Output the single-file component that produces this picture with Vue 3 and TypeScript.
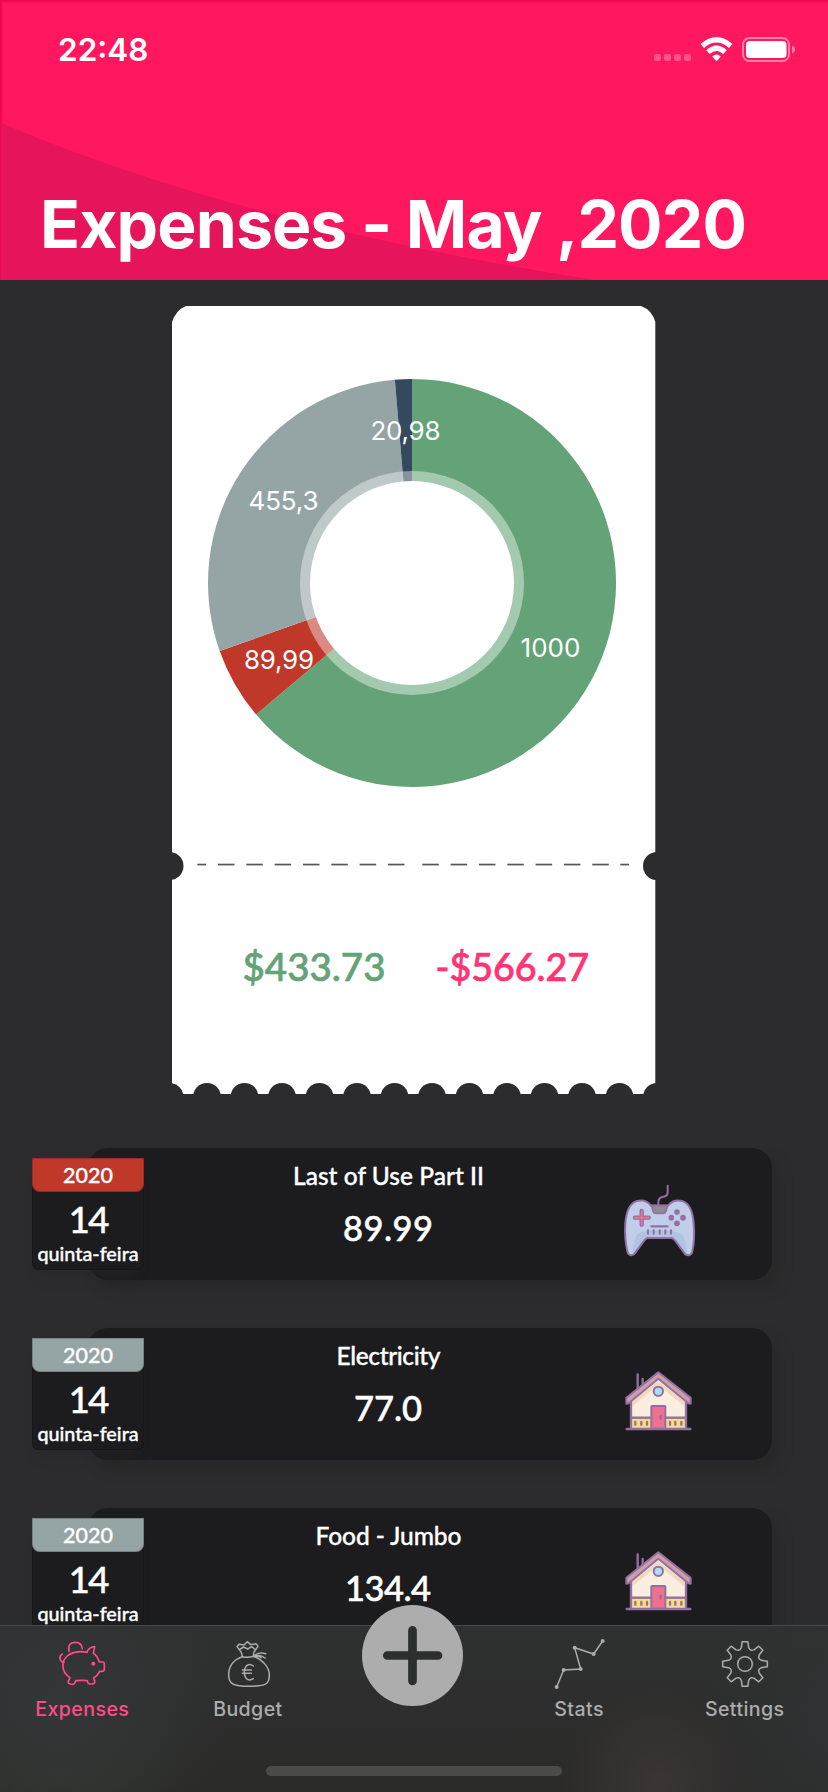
<script setup lang="ts">
interface Slice { label: string; value: number; color: string; x: number; y: number; width: number }
interface Expense { title: string; amount: string; color: string; icon: 'game' | 'house'; titleWidth: number; amountWidth: number }

const slices: Slice[] = [
  { label: '1000', value: 1000, color: '#64a377', x: 348.5, y: 351, width: 60 },
  { label: '89,99', value: 89.99, color: '#bf382a', x: 72, y: 363, width: 70 },
  { label: '455,3', value: 455.3, color: '#95a4a5', x: 76.5, y: 204, width: 70 },
  { label: '20,98', value: 20.98, color: '#34495e', x: 198.5, y: 134, width: 70 },
]

const total = slices.reduce((sum, s) => sum + s.value, 0)
const cx = 240
const cy = 277
const radius = 204

let running = 0
const wedges = slices.map((s) => {
  const a0 = (running / total) * Math.PI * 2
  running += s.value
  const a1 = (running / total) * Math.PI * 2
  const point = (a: number) => `${(cx + radius * Math.sin(a)).toFixed(2)} ${(cy - radius * Math.cos(a)).toFixed(2)}`
  const large = a1 - a0 > Math.PI ? 1 : 0
  return { ...s, d: `M${cx} ${cy}L${point(a0)}A${radius} ${radius} 0 ${large} 1 ${point(a1)}Z` }
})

const scallops = Array.from({ length: 14 }, (_, i) => -2.5 + i * 37.5)
const dashes = [
  { x: 25.3, w: 8.7 },
  ...Array.from({ length: 7 }, (_, i) => ({ x: 46 + i * 28.33, w: 16.5 })),
  ...Array.from({ length: 7 }, (_, i) => ({ x: 250.3 + i * 28.33, w: 16.5 })),
  { x: 448.3, w: 8.7 },
]

const expenses: Expense[] = [
  { title: 'Last of Use Part II', amount: '89.99', color: '#bf382a', icon: 'game', titleWidth: 191, amountWidth: 90 },
  { title: 'Electricity', amount: '77.0', color: '#95a4a5', icon: 'house', titleWidth: 104, amountWidth: 68 },
  { title: 'Food - Jumbo', amount: '134.4', color: '#95a4a5', icon: 'house', titleWidth: 146, amountWidth: 86 },
]

const gear = Array.from({ length: 8 }, (_, i) => i * 45)
  .map((deg) => {
    const r = (deg * Math.PI) / 180
    return [[-15, -43], [-11, -49], [-8.5, -67], [8.5, -67], [11, -49], [15, -43]]
      .map(([x, y]) => `${(1002 + x * Math.cos(r) - y * Math.sin(r)).toFixed(1)},${(492 + x * Math.sin(r) + y * Math.cos(r)).toFixed(1)}`)
      .join(' ')
  })
  .join(' ')
</script>

<template>
  <div class="screen">
    <header class="header">
      <svg class="swoosh" viewBox="0 0 828 280"><path d="M0 123Q240 225 594 280H0Z" fill="#e6145a" /></svg>
      <div class="status">
        <span class="time">22:48</span>
        <svg width="144" height="30" viewBox="0 0 144 30">
          <g fill="#ff5488">
            <rect x="1" y="19" width="7" height="7" rx="2" /><rect x="11" y="19" width="7" height="7" rx="2" />
            <rect x="21" y="19" width="7" height="7" rx="2" /><rect x="31" y="19" width="7" height="7" rx="2" />
          </g>
          <g fill="none" stroke="#fff" stroke-width="5.2">
            <path d="M49.3 11Q63.5-1.4 77.7 11" /><path d="M55 17.1Q63.5 9.5 72 17.1" />
          </g>
          <path d="M59.2 21.4Q63.5 17.8 67.8 21.4L63.5 26.2Z" fill="#fff" />
          <rect x="90" y="3" width="46" height="23" rx="6.5" fill="none" stroke="#ff80a6" stroke-width="2" />
          <rect x="93" y="6" width="40.5" height="17" rx="4" fill="#fff" />
          <path d="M139 10.5q3 1.2 3 4t-3 4z" fill="#ff80a6" />
        </svg>
      </div>
      <h1>Expenses - May ,2020</h1>
    </header>

    <main>
      <svg class="ticket" width="484" height="788" viewBox="0 0 484 788">
        <path d="M14 0H469Q480 4 483.3 16V788H0V16Q4 4 14 0Z" fill="#fff" />
        <path v-for="w in wedges" :key="w.label" :d="w.d" :fill="w.color" />
        <circle :cx="cx" :cy="cy" r="112" fill="#fff" fill-opacity=".41" />
        <circle :cx="cx" :cy="cy" r="102" fill="#fff" />
        <text v-for="w in wedges" :key="'t' + w.label" class="slice" :x="w.x" :y="w.y" :textLength="w.width">{{ w.label }}</text>
        <g fill="#2c2c2e">
          <circle cx="-2.5" cy="560" r="14" /><circle cx="485" cy="560" r="14" />
          <circle v-for="s in scallops" :key="s" :cx="s" cy="791" r="14" />
        </g>
        <rect v-for="d in dashes" :key="d.x" :x="d.x" y="557.7" :width="d.w" height="1.7" fill="#555658" />
        <text class="amount income" x="70.5" y="675" textLength="143" lengthAdjust="spacingAndGlyphs">$433.73</text>
        <text class="amount outcome" x="263.5" y="675" textLength="153.5" lengthAdjust="spacingAndGlyphs">-$566.27</text>
      </svg>

      <section class="list">
        <article v-for="e in expenses" :key="e.title" class="row">
          <div class="date">
            <div class="year" :style="{ background: e.color }">2020</div>
            <div class="day">14</div>
            <div class="weekday">quinta-feira</div>
          </div>
          <div class="card">
            <svg class="info" width="464" height="131" viewBox="0 0 464 131">
              <text class="title" :x="232.5 - e.titleWidth / 2" y="37" :textLength="e.titleWidth">{{ e.title }}</text>
              <text class="value" :x="232 - e.amountWidth / 2" y="93" :textLength="e.amountWidth">{{ e.amount }}</text>
            </svg>
            <svg v-if="e.icon === 'game'" class="icon" viewBox="60 60 240 240">
              <path d="M203 77V98Q202 109 190 110Q175 112 175 126V136" fill="none" stroke="#9270a5" stroke-width="6" stroke-linecap="round" />
              <path d="M153 137C142 122 125 119 108 124C87 131 79 154 76 190C74 222 76 250 83 278C87 288 101 288 106 278L130 245Q138 234 144 234H214Q220 234 228 245L252 278C258 288 272 288 276 278C283 250 284 222 281 190C278 154 270 131 249 124C232 119 216 122 204 137Z" fill="#c1cee9" />
              <path d="M97 283Q98 236 114 222Q128 210 179 211T244 222Q260 236 262 284L252 278L228 245Q220 234 214 234H144Q138 234 130 245L106 278Z" fill="#b0c3e2" />
              <path d="M153 137C142 122 125 119 108 124C87 131 79 154 76 190C74 222 76 250 83 278C87 288 101 288 106 278L130 245Q138 234 144 234H214Q220 234 228 245L252 278C258 288 272 288 276 278C283 250 284 222 281 190C278 154 270 131 249 124C232 119 216 122 204 137Z" fill="none" stroke="#9270a5" stroke-width="6" />
              <path d="M154 136H203L198 153Q196 160 189 160H168Q161 160 159 153Z" fill="#8b8b95" stroke="#9270a5" stroke-width="5" />
              <path d="M125 153V194M105 173H146" stroke="#9270a5" stroke-width="13" stroke-linecap="round" />
              <path d="M125 153V194M105 173H146" stroke="#f17592" stroke-width="5" stroke-linecap="round" />
              <g fill="#9270a5"><circle cx="231" cy="156" r="8.5" /><circle cx="214" cy="173" r="8.5" /><circle cx="249" cy="173" r="8.5" /><circle cx="231" cy="190" r="8.5" /></g>
              <path d="M154 199H203M144 211v10M161 211v10M179 211v10M196 211v10M213 211v10" stroke="#9270a5" stroke-width="6.5" stroke-linecap="round" />
            </svg>
            <svg v-else class="icon" viewBox="60 60 240 240">
              <path d="M93 178L175 113L257 178V234H93Z" fill="#faeee0" />
              <path d="M97 184L175 124L253 184V199L175 135L97 199Z" fill="#f2d9bd" />
              <path d="M94 235H257V265H94Z" fill="#f8dc84" />
              <path d="M113 103V146M128 117V137M93 178V265M258 178V265M93 233H258" stroke="#9270a5" stroke-width="7" stroke-linecap="round" />
              <path d="M175 97L272 173V191L265 190L175 116L86 190L79 191V173Z" fill="#cf9da5" stroke="#9270a5" stroke-width="6" stroke-linejoin="round" />
              <circle cx="175" cy="154" r="14" fill="#acdcf8" stroke="#9270a5" stroke-width="6" />
              <rect x="154" y="198" width="42" height="68" rx="2" fill="#f0708f" stroke="#9270a5" stroke-width="6" />
              <path d="M182 228v8M106 246v8M124 246v8M141 246v8M210 246v8M226 246v8M244 246v8" stroke="#9270a5" stroke-width="7" stroke-linecap="round" />
              <path d="M80 267H271" stroke="#9270a5" stroke-width="7" stroke-linecap="round" />
            </svg>
          </div>
        </article>
      </section>
    </main>

    <nav class="tabs">
      <a class="tab active">
        <svg viewBox="156 411 180 162">
          <g fill="none" stroke="currentColor" stroke-width="5" stroke-linecap="round" stroke-linejoin="round">
            <path d="M207 454C203 434 213 427 226 427S246 436 247 446" />
            <path d="M192 487C179 486 175 469 187 462" />
            <path d="M261 457C264 447 274 441 284 440L280 460Q291 466 298 486H307Q313 486 313 491V508Q313 514 307 514H299Q292 528 281 534L284 544Q285 551 277 552H269Q263 552 262 542Q245 540 227 542Q225 552 219 553L211 552Q203 550 205 544L210 533C180 512 184 479 207 464Q230 450 261 457Z" />
          </g>
          <circle cx="280" cy="491" r="6" fill="currentColor" />
        </svg>
        <span>Expenses</span>
      </a>
      <a class="tab">
        <svg viewBox="654 411 180 162">
          <g fill="none" stroke="currentColor" stroke-width="4.5" stroke-linecap="round" stroke-linejoin="round">
            <path d="M727 469L724 457L711 440L717 433L732 435L742 425L752 434L768 431L774 439L762 456L760 469M721 447L731 441L743 447L755 440L764 447" />
            <path d="M727 470Q743 474 760 469C787 478 808 502 808 524C808 548 800 555 775 557Q745 561 718 557C694 555 686 545 686 522C687 498 702 478 727 470Z" />
            <path d="M761 469Q774 454 797 461M764 470Q778 461 795 474M764 470Q777 467 783 473" />
            <path d="M760 498C747 488 733 497 733 517S747 545 760 536M727 510H754M727 520H754" />
          </g>
        </svg>
        <span>Budget</span>
      </a>
      <a class="tab add">
        <svg viewBox="0 0 101 101"><circle cx="50.5" cy="50.5" r="50.5" fill="#adadad" /><path d="M50.5 25.3V76M25.3 50.5H76" stroke="#2d2f2e" stroke-width="8.7" stroke-linecap="round" /></svg>
      </a>
      <a class="tab">
        <svg viewBox="415 411 180 162">
          <path d="M438 561L459 510L510 507L492 443L549 462L576 423" fill="none" stroke="currentColor" stroke-width="4.5" />
          <g fill="currentColor"><circle cx="438" cy="561" r="6" /><circle cx="459" cy="510" r="6" /><circle cx="510" cy="507" r="6" /><circle cx="492" cy="443" r="6" /><circle cx="549" cy="462" r="6" /><circle cx="576" cy="423" r="6" /></g>
        </svg>
        <span>Stats</span>
      </a>
      <a class="tab">
        <svg viewBox="912 411 180 162">
          <polygon :points="gear" fill="none" stroke="currentColor" stroke-width="4.5" stroke-linejoin="round" />
          <circle cx="1002" cy="492" r="22" fill="none" stroke="currentColor" stroke-width="4.5" />
        </svg>
        <span>Settings</span>
      </a>
      <div class="home"></div>
    </nav>
  </div>
</template>

<style>
body { margin: 0; background: #2c2c2e; }
</style>

<style scoped>
.screen { position: relative; width: 828px; height: 1792px; overflow: hidden; background: #2c2c2e; color: #fff; font-family: Inter, "Liberation Sans", sans-serif; }
.header { position: relative; height: 280px; background: #ff175f; box-shadow: inset 2px 2px 2px #ee0750; overflow: hidden; }
.swoosh { position: absolute; left: 1px; top: 0; width: 828px; height: 280px; }
.status { position: relative; display: flex; justify-content: space-between; align-items: flex-start; padding: 35px 31px 0 58px; height: 65px; }
.time { font-size: 31.5px; line-height: 30px; font-weight: 600; letter-spacing: 0; }
h1 { position: relative; margin: 84px 0 0 40px; font-size: 66px; line-height: 80px; font-weight: 700; letter-spacing: -.9px; white-space: nowrap; }
.ticket { display: block; margin: 26px 0 0 172px; }
.slice { font-size: 26px; fill: #fff; }
.amount { font: 500 38px Lato, "Open Sans", sans-serif; stroke-width: .7px; }
.income { fill: #64a377; stroke: #64a377; }
.outcome { fill: #ff3376; stroke: #ff3376; }
.list { display: flex; flex-direction: column; gap: 48px; margin-top: 54px; font-family: Lato, "Open Sans", sans-serif; font-weight: 500; }
.row { display: flex; align-items: flex-start; height: 132px; padding-left: 32px; }
.date { position: relative; z-index: 1; width: 112px; height: 112px; margin-top: 10px; border-radius: 0 0 7px 7px; background: #1c1c1e; box-shadow: inset 0 0 0 1px #171719, 0 14px 10px -8px rgba(38, 38, 38, .55); text-align: center; flex: none; -webkit-text-stroke: .35px #fff; }
.card { flex: none; display: grid; grid-template-columns: 464px 80px; width: 684px; height: 132px; margin-left: -56px; padding-left: 68px; box-sizing: border-box; border-radius: 20px; background: #1c1c1e; box-shadow: 8px 10px 12px rgba(39, 39, 39, .7); }
.year { height: 34px; line-height: 34px; border-radius: 0 0 8px 8px; box-shadow: inset 0 0 0 1px rgba(0, 0, 0, .2); font-size: 21.5px; }
.day { height: 42px; line-height: 53px; font-size: 37px; letter-spacing: -2px; }
.weekday { line-height: 38px; font-size: 19.8px; white-space: nowrap; }
.info { display: block; }
.title { font-size: 24.5px; fill: #fff; stroke: #fff; stroke-width: .35px; }
.value { font-size: 34.5px; fill: #fff; stroke: #fff; stroke-width: .5px; }
.icon { width: 80px; height: 80px; margin-top: 32px; }
.tabs { position: absolute; z-index: 3; left: 0; bottom: 0; box-sizing: border-box; width: 828px; height: 167px; display: grid; grid-template-columns: repeat(5, 1fr); border-top: 1px solid #49494b; background: radial-gradient(ellipse 100px 100px at 658px 160px, #3c3536, transparent), radial-gradient(ellipse 170px 130px at 60px 70px, #353638, transparent), radial-gradient(ellipse 160px 90px at 60px 150px, #30342f, transparent), radial-gradient(ellipse 130px 180px at 828px 100px, #303132, transparent), linear-gradient(#2f3130, #2a2a29); }
.tab { display: flex; flex-direction: column; align-items: center; margin-left: -1px; padding-top: 11px; color: #acacac; font-size: 19.6px; font-weight: 500; letter-spacing: .4px; }
.tab svg { width: 60px; height: 54px; }
.tab span { line-height: 26px; margin-top: 5px; }
.tab.active { color: #ff4b87; }
.tab.add { margin-left: -2px; padding-top: 0; }
.tab.add svg { width: 101px; height: 101px; margin-top: -21px; flex: none; }
.home { position: absolute; left: 266px; bottom: 16px; width: 296px; height: 10px; border-radius: 5px; background: #4b4b4b; }
</style>
